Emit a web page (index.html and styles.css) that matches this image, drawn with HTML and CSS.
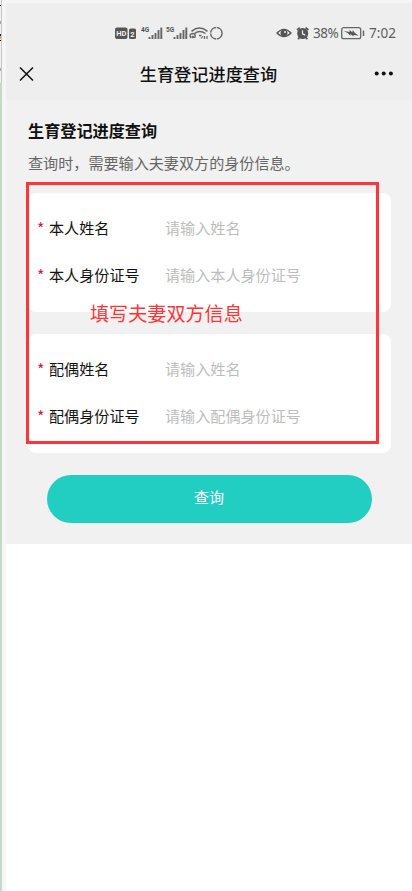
FILE: index.html
```
<!DOCTYPE html>
<html lang="zh-CN">
<head>
<meta charset="utf-8">
<title>生育登记进度查询</title>
<link rel="stylesheet" href="styles.css">
</head>
<body>
<div class="edge"></div>
<main class="screen">
  <div class="status">
    <svg class="status-left" width="110" height="16" viewBox="0 0 110 16">
      <rect x="1" y="2.500" width="12.500" height="11.500" rx="2" fill="#555"/>
      <text x="2.300" y="11.200" class="badge-text">HD</text>
      <rect x="15" y="3.500" width="7" height="10.500" rx="1.500" fill="#555"/>
      <text x="16.200" y="11.800" class="badge-text">2</text>
      <text x="27" y="7.400" class="net-text">4G</text>
      <path d="M35.500 14v-2M38.500 14v-4M41.500 14V8M44.500 14V5M47.300 14V2.500" stroke="#666" stroke-width="1.900"/>
      <text x="52" y="7.400" class="net-text">5G</text>
      <path d="M60.500 14v-2M63.500 14v-4M66.500 14V8M69.500 14V5M72.300 14V2.500" stroke="#666" stroke-width="1.900"/>
      <g fill="none" stroke="#666" stroke-width="1.500">
        <path d="M77.500 6.300Q85.500-.2 93.500 6.300M80.500 8.500Q85.500 4.500 91.500 8.500"/>
        <path d="M77 13Q74.500 9 78.500 8.500Q82.500 9 80.500 13M85 10.500h2.500"/>
        <path d="M87 13.300l2-2M90.500 11v3M93 11v3" stroke-width="1.200"/>
        <circle cx="102.300" cy="8.200" r="5.700" stroke-dasharray="8.200 .8"/>
      </g>
      <circle cx="78.800" cy="12" r="1.300" fill="#666"/>
    </svg>
    <div class="status-right">
      <svg width="34" height="16" viewBox="0 0 34 16">
        <path d="M1 8Q8 .8 15 8Q8 15.200 1 8Z" fill="none" stroke="#555" stroke-width="1.400"/>
        <circle cx="8" cy="8" r="3.500" fill="#555"/><circle cx="9" cy="7" r="1" fill="#eee"/>
        <circle cx="26.700" cy="8.500" r="5.500" fill="#555"/>
        <path d="M21 5l2.800-2.300M32.400 5l-2.800-2.300M23.300 12.500l-1.200 1.700M30.100 12.500l1.200 1.700" stroke="#555" stroke-width="1.700"/>
        <path d="M26.500 5.300v3.500l2.700 1.300" fill="none" stroke="#eee" stroke-width="1.200"/>
      </svg>
      <span class="percent">38%</span>
      <svg width="25" height="16" viewBox="0 0 25 16">
        <rect x="1.700" y="2.700" width="19" height="11" rx="2" fill="none" stroke="#666" stroke-width="1.300"/>
        <path d="M4 6l5.500 1V5l3 2.500V5l2.500 3L18.500 10.500l-5-.6v1.500L10.500 9v2L8 8.200Z" fill="#555"/>
        <path d="M23.500 5.500v5.500" stroke="#666" stroke-width="1.500"/>
      </svg>
      <span class="clock">7:02</span>
    </div>
  </div>
  <header class="nav">
    <svg width="15" height="15" viewBox="0 0 15 15"><path d="M1 .5l13 13M14 .5L1 13.500" stroke="#111" stroke-width="1.500"/></svg>
    <h1>生育登记进度查询</h1>
    <svg width="20" height="6" viewBox="0 0 20 6" fill="#111"><circle cx="2.700" cy="2.500" r="2"/><circle cx="9.700" cy="2.500" r="2"/><circle cx="16.900" cy="2.500" r="2"/></svg>
  </header>
  <section class="intro">
    <h2>生育登记进度查询</h2>
    <p>查询时，需要输入夫妻双方的身份信息。</p>
  </section>
  <form class="form">
    <div class="card">
      <div class="row"><i>*</i><label>本人姓名</label><span>请输入姓名</span></div>
      <div class="row"><i>*</i><label>本人身份证号</label><span>请输入本人身份证号</span></div>
    </div>
    <div class="card">
      <div class="row"><i>*</i><label>配偶姓名</label><span>请输入姓名</span></div>
      <div class="row"><i>*</i><label>配偶身份证号</label><span>请输入配偶身份证号</span></div>
    </div>
    <button type="button" class="submit">查询</button>
  </form>
</main>
<div class="mark-box"></div>
<div class="mark-text">填写夫妻双方信息</div>
</body>
</html>
```
FILE: styles.css
```
* { box-sizing: border-box; }
body {
  margin: 0;
  position: relative;
  display: flex;
  height: 891px;
  overflow: hidden;
  background: #fff;
  font-family: "Noto Sans CJK SC", sans-serif;
  color: #111;
}
.edge {
  width: 6px;
  flex: none;
  border-right: 4px solid #f5f5f5;
  background:
    linear-gradient(#111, #111) 0 5px / 1px 1px no-repeat,
    linear-gradient(#aaa, #aaa) 0 21px / 1px 3px no-repeat,
    linear-gradient(#126, #126) 0 34px / 1px 2px no-repeat,
    linear-gradient(#e9a23b, #e9a23b) 0 36px / 1px 3px no-repeat,
    linear-gradient(#111, #111) 0 40px / 1px 1px no-repeat,
    linear-gradient(#aaa, #aaa) 0 68px / 1px 3px no-repeat,
    linear-gradient(#c8c8c8, #c8c8c8) 1px 0 / 1px 83px no-repeat,
    linear-gradient(#f0f0f0 83px, #c3dac7 83px);
}
.screen {
  flex: 1;
  height: 544px;
  border-top: 3px solid #f5f5f5;
  background: linear-gradient(#eee 97px, #f1f1f1 97px);
}
.status {
  display: flex;
  justify-content: space-between;
  align-items: center;
  height: 60px;
  padding: 0 16px 0 108px;
}
.badge-text { font: bold 7.500px Roboto, sans-serif; fill: #eee; }
.net-text { font: bold 6.500px Roboto, sans-serif; fill: #555; }
.status-right {
  display: flex;
  align-items: center;
  line-height: 16px;
  font-family: "Noto Sans", sans-serif;
  color: #5d5d5d;
}
.percent { width: 27px; margin: 0 0 0 3px; font-size: 13.500px; letter-spacing: -.5px; }
.clock { width: 27px; margin: 0 0 0 4px; font-size: 13.500px; letter-spacing: .1px; }
.nav {
  display: flex;
  align-items: center;
  justify-content: space-between;
  height: 22px;
  padding: 0 18px 0 13px;
}
h1 { margin: 0 0 0 9px; font-size: 17.200px; line-height: 22px; font-weight: 500; }
.intro { padding: 33px 22px 0; }
h2 { margin: 0; font-size: 16.150px; line-height: 24px; font-weight: 700; }
.intro p { margin: 9px 0 0; font-size: 15.100px; line-height: 22px; color: #666; white-space: nowrap; }
.form { padding: 20px 21px 0 22px; }
.card {
  height: 119px;
  margin-bottom: 22px;
  padding: 10px 9px;
  border-radius: 8px;
  background: #fff;
}
.row {
  display: grid;
  grid-template-columns: 12px 116px 1fr;
  align-items: center;
  height: 47px;
  font-size: 15.100px;
}
.row i { font-style: normal; font-size: 16px; line-height: 22px; padding-top: 2px; color: #c51f42; }
.row span { color: #bdbdbd; }
.submit {
  display: block;
  width: 325px;
  height: 48px;
  margin: 0 0 0 19px;
  padding: 0 1px 6px 0;
  border: 0;
  border-radius: 24px;
  background: #22cdc2;
  color: #fff;
  font: 15px "Noto Sans CJK SC", sans-serif;
}
.mark-box {
  position: absolute;
  left: 26px;
  top: 182px;
  width: 353px;
  height: 262px;
  border: 3px solid #ff3538;
}
.mark-text {
  position: absolute;
  left: 90px;
  top: 300px;
  color: #ff3538;
  font-size: 19.100px;
  line-height: 26px;
}
```
